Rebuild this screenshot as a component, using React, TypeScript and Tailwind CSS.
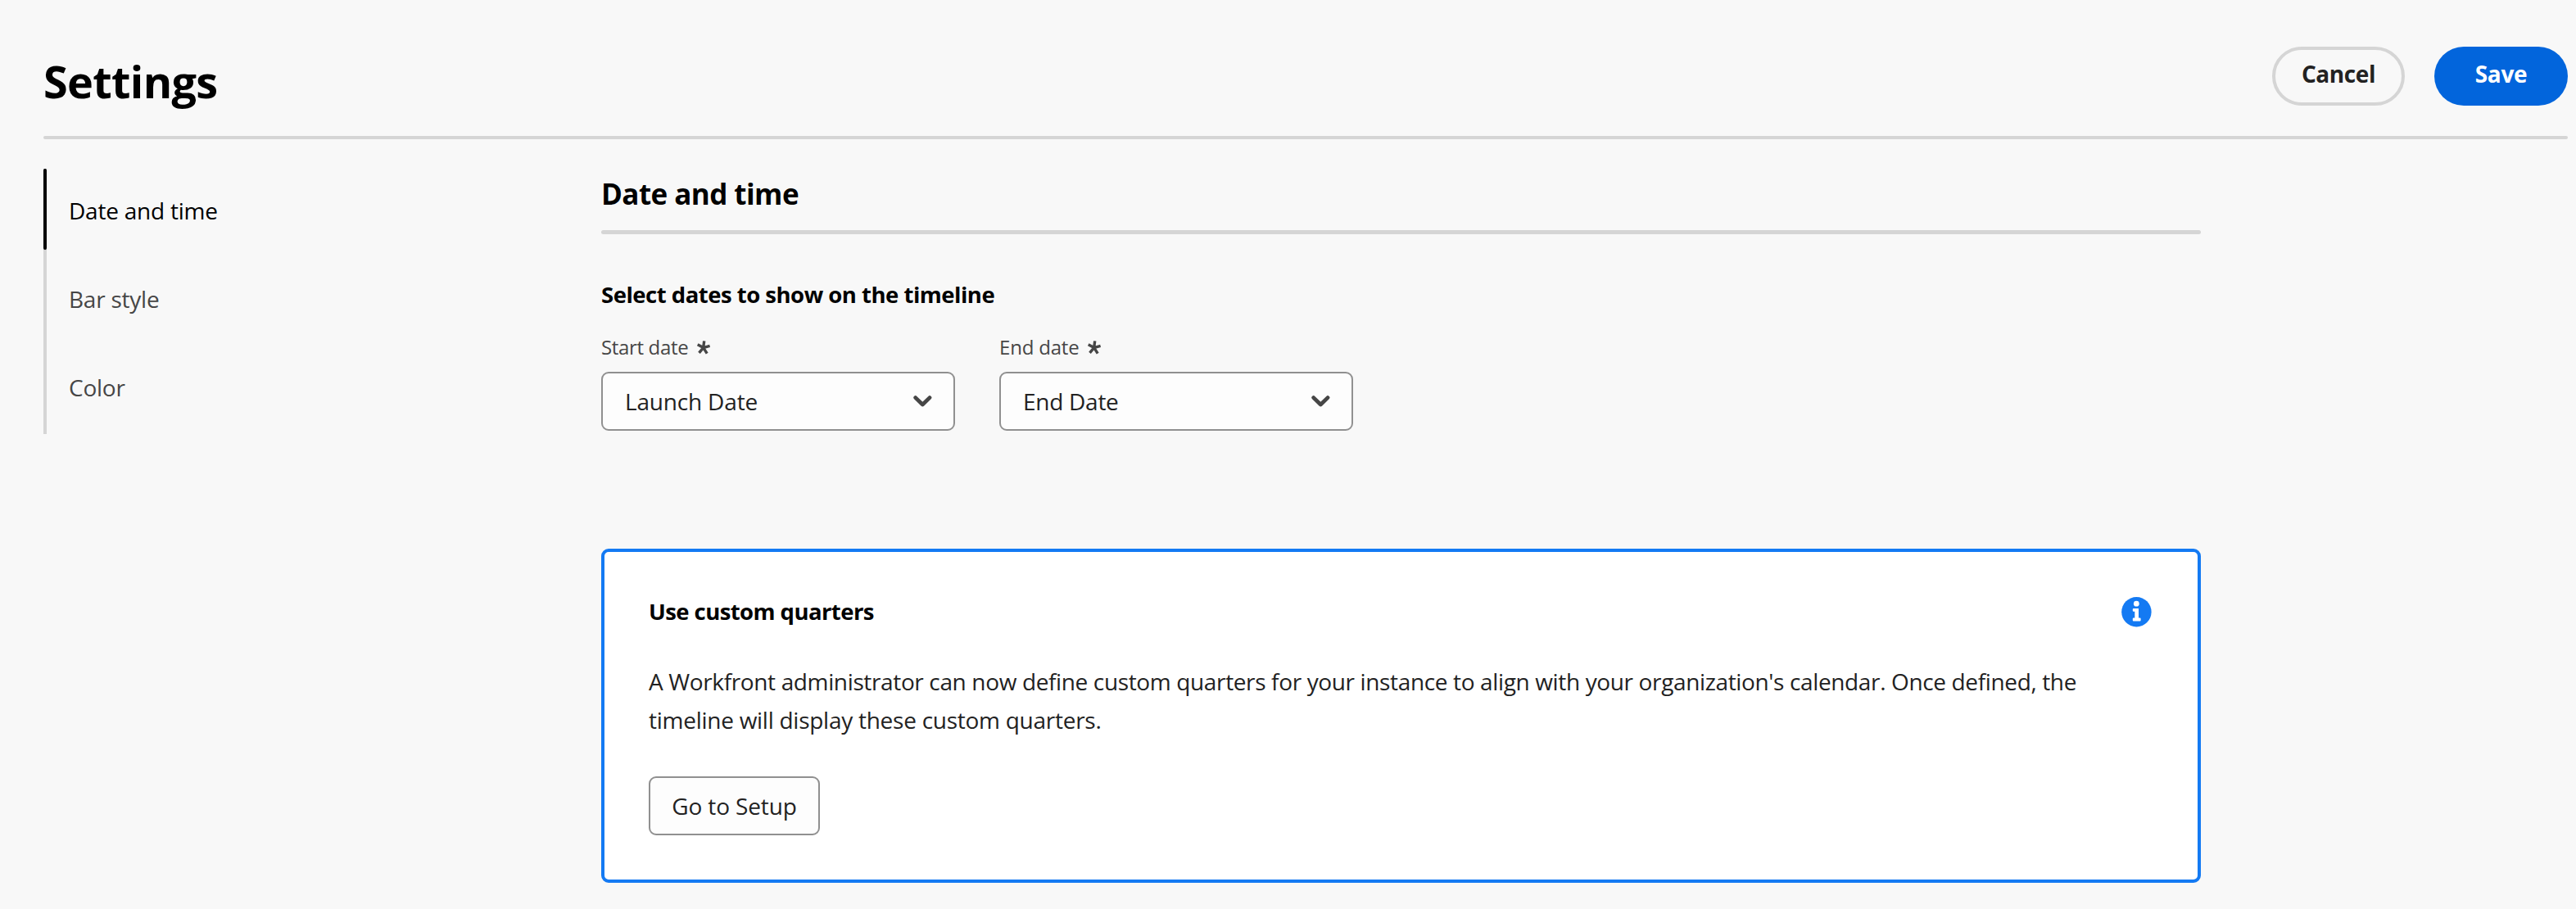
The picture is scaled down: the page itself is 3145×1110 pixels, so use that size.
import React from "react";

function Asterisk() {
  return (
    <svg className="mt-px h-[17px] w-4" viewBox="0 0 16 17" fill="none" stroke="#464646" strokeWidth="3.4">
      <path d="M7.7 8.6 8.7 0.4M7.7 8.6 15.6 6.4M7.7 8.6 12.2 15.6M7.7 8.6 2.5 14.9M7.7 8.6 0.7 4.7" />
    </svg>
  );
}

function Chevron() {
  return (
    <svg className="h-[14px] w-[23px] shrink-0" viewBox="0 0 23 14" fill="none" stroke="#464646" strokeWidth="4.8" strokeLinecap="round" strokeLinejoin="round">
      <path d="M2.7 2.6 11.35 11 20 2.6" />
    </svg>
  );
}

function InfoIcon() {
  return (
    <svg className="h-[37px] w-[37px] shrink-0" viewBox="0 0 37 37">
      <circle cx="18.4" cy="18.2" r="18.2" fill="#147af3" />
      <circle cx="18.3" cy="8.2" r="3.4" fill="#fff" />
      <path
        d="M14.8 14h6.2v11.5h1.6a1 1 0 0 1 1 1v2.1a1 1 0 0 1-1 1h-7.8a1 1 0 0 1-1-1v-2.1a1 1 0 0 1 1-1h1.5v-7.7h-1.5a1 1 0 0 1-1-1V15a1 1 0 0 1 1-1z"
        fill="#fff"
      />
    </svg>
  );
}

function NavItem({ label, active }: { label: string; active?: boolean }) {
  return (
    <li
      className={
        "-ml-1 flex h-[99px] items-center pt-[3px] pl-[31px] text-[28px] tracking-[-0.23px] " +
        (active ? "text-black" : "text-[#464646]")
      }
    >
      {label}
    </li>
  );
}

function Picker({ label, labelClass, value, valueClass }: { label: string; labelClass: string; value: string; valueClass: string }) {
  return (
    <div className="w-[432px]">
      <div className="flex h-8 items-center gap-[11px] text-[24px] text-[#464646]">
        <span className={labelClass}>{label}</span>
        <Asterisk />
      </div>
      <button className="mt-[14px] flex h-[72px] w-full items-center justify-between rounded-[9px] border-2 border-[#909090] bg-[#fdfdfd] pr-[26px] pl-[27px] text-[28px] text-[#222222]">
        <span className={valueClass}>{value}</span>
        <Chevron />
      </button>
    </div>
  );
}

export default function App() {
  return (
    <div className="h-[1110px] w-[3145px] overflow-hidden bg-[#f8f8f8] pr-[10px] pl-[53px] font-['Open_Sans',sans-serif] text-black">
      <header className="flex h-[166px] items-start justify-between">
        <h1 className="mt-[59px] text-[54px] leading-[80px] font-bold tracking-[-0.67px]">Settings</h1>
        <div className="mt-[57px] flex gap-9">
          <button className="h-[72px] w-[162px] rounded-full border-4 border-[#d5d5d5] pb-[6px] text-[28px] leading-[58px] font-bold tracking-[-0.4px] text-[#222222]">
            Cancel
          </button>
          <button className="h-[72px] w-[163px] rounded-full bg-[#0265dc] pb-[6px] text-[28px] leading-[66px] font-bold tracking-[-0.33px] text-white">
            Save
          </button>
        </div>
      </header>
      <div className="h-1 rounded-full bg-[#d5d5d5]" />

      <div className="flex">
        <nav className="mt-9 flex h-[324px] w-[681px] shrink-0">
          <div className="w-1 bg-[#d5d5d5]">
            <div className="h-[99px] rounded-[2px] bg-black" />
          </div>
          <ul className="flex flex-col gap-[9px]">
            <NavItem label="Date and time" active />
            <NavItem label="Bar style" />
            <NavItem label="Color" />
          </ul>
        </nav>

        <main className="w-[1953px] pt-[43px]">
          <h2 className="text-[35px] leading-[48px] font-bold tracking-[-0.56px]">Date and time</h2>
          <div className="mt-5 h-[5px] rounded-full bg-[#d5d5d5]" />
          <h3 className="mt-[54px] text-[27.5px] leading-10 font-bold tracking-[-0.5px]">
            Select dates to show on the timeline
          </h3>
          <div className="mt-7 flex gap-[54px]">
            <Picker label="Start date" labelClass="tracking-[-0.34px]" value="Launch Date" valueClass="tracking-[-0.18px]" />
            <Picker label="End date" labelClass="tracking-[-0.2px]" value="End Date" valueClass="tracking-[-0.27px]" />
          </div>

          <section className="mt-36 h-[408px] rounded-[9px] border-4 border-[#147af3] bg-white pt-[53px] pr-[56px] pl-[54px]">
            <div className="flex h-10 items-center justify-between">
              <h3 className="text-[27.5px] leading-10 font-bold tracking-[-0.57px]">Use custom quarters</h3>
              <InfoIcon />
            </div>
            <p className="mt-[42px] text-[28px] leading-[47px] text-[#222222]">
              <span className="block tracking-[-0.361px] whitespace-nowrap">
                A Workfront administrator can now define custom quarters for your instance to align with your organization's calendar. Once defined, the
              </span>
              <span className="block tracking-[-0.263px]">timeline will display these custom quarters.</span>
            </p>
            <button className="mt-[45px] h-[72px] w-[209px] rounded-[9px] border-2 border-[#909090] bg-[#fdfdfd] text-[28px] tracking-[-0.14px] text-[#222222]">
              Go to Setup
            </button>
          </section>
        </main>
      </div>
    </div>
  );
}
